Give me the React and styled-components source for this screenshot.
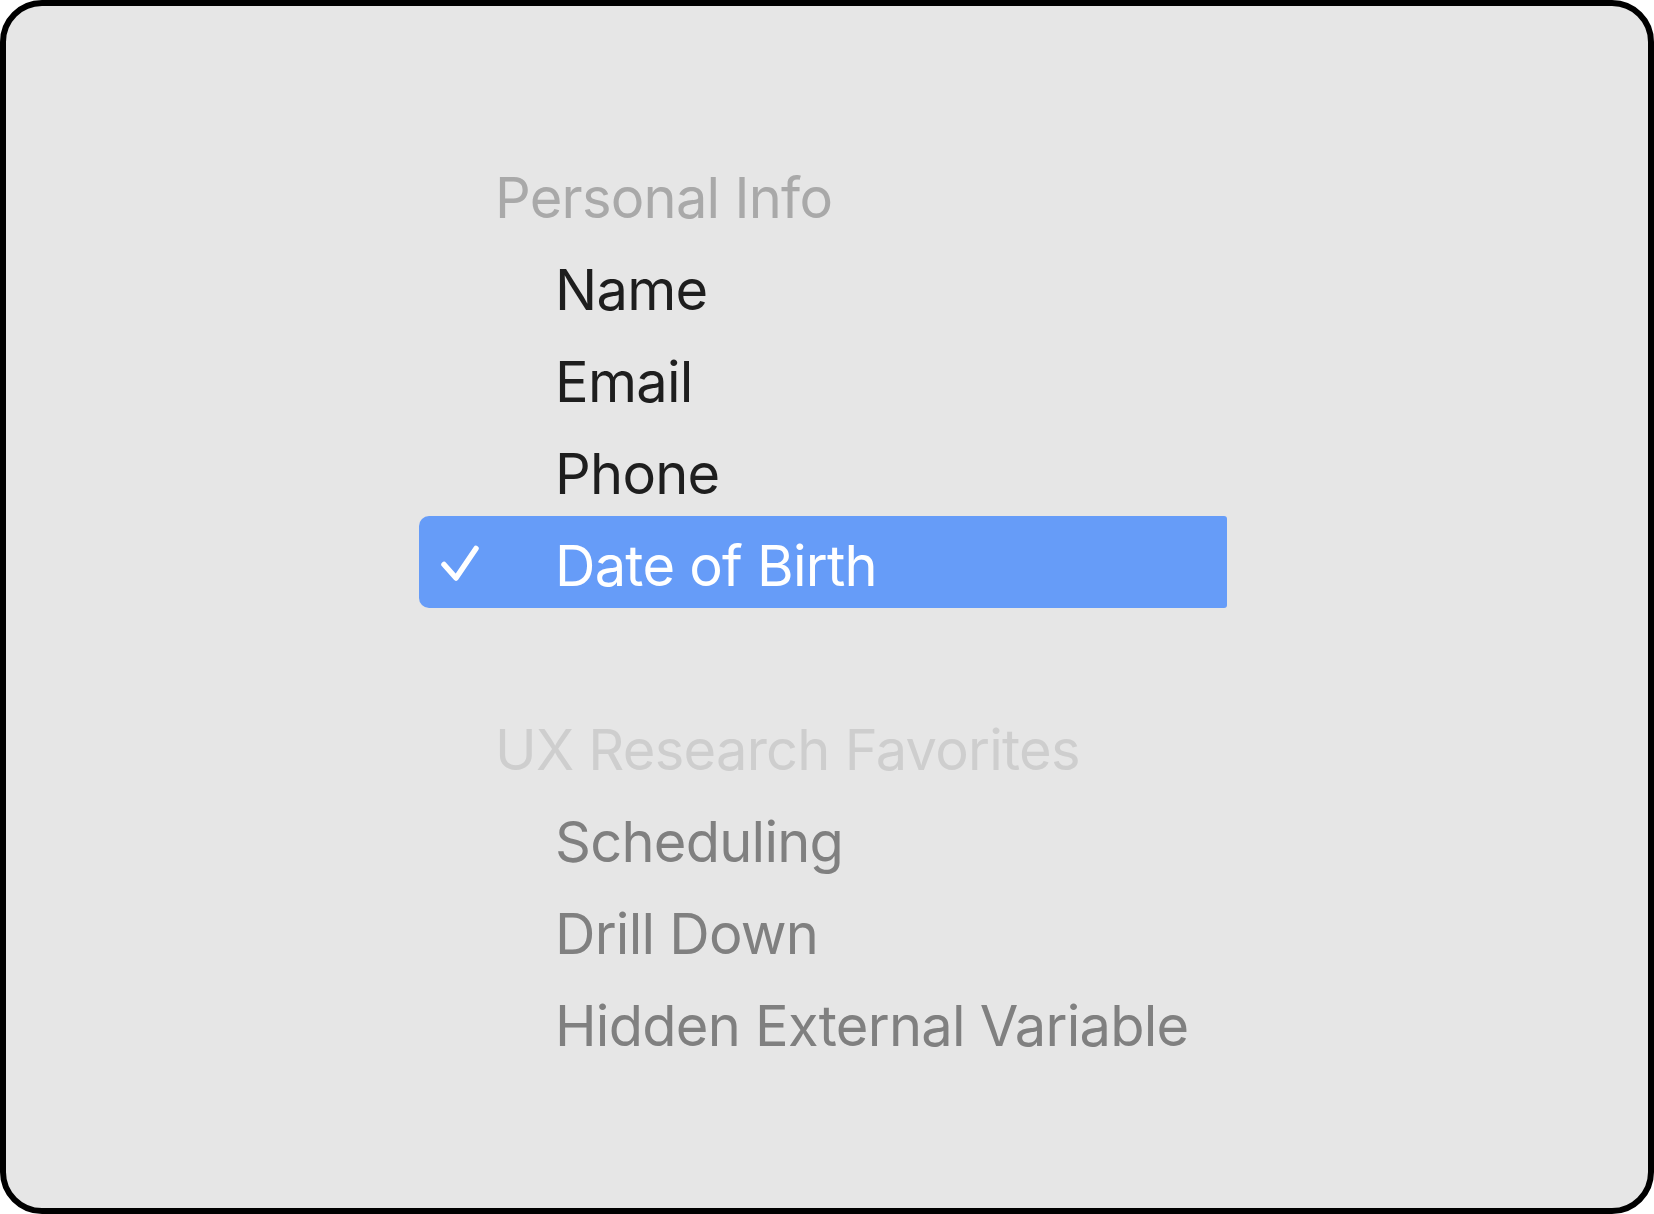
import React from 'react';
import styled, { createGlobalStyle } from 'styled-components';

const GlobalStyle = createGlobalStyle`
  html, body {
    margin: 0;
    padding: 0;
    background: #ffffff;
  }
  * {
    box-sizing: border-box;
  }
`;

const sections = [
  {
    title: 'Personal Info',
    muted: false,
    items: [
      { label: 'Name' },
      { label: 'Email' },
      { label: 'Phone' },
      { label: 'Date of Birth', selected: true },
    ],
  },
  {
    title: 'UX Research Favorites',
    muted: true,
    items: [
      { label: 'Scheduling' },
      { label: 'Drill Down' },
      { label: 'Hidden External Variable' },
    ],
  },
];

const CheckIcon = () => (
  <svg width="38" height="38" viewBox="0 0 38 38" fill="none">
    <path
      d="M3 19.5 L15 33 L35 3.5"
      stroke="#ffffff"
      strokeWidth="5.5"
      strokeLinecap="round"
      strokeLinejoin="round"
    />
  </svg>
);

const App = () => {
  return (
    <>
      <GlobalStyle />
      <Frame>
        <Menu>
          {sections.map((section, i) => (
            <Section key={section.title}>
              {i > 0 && <Spacer />}
              <Header muted={section.muted}>{section.title}</Header>
              {section.items.map((item) => (
                <Row key={item.label} selected={item.selected}>
                  <CheckCell>{item.selected && <CheckIcon />}</CheckCell>
                  <Label selected={item.selected} muted={section.muted}>
                    {item.label}
                  </Label>
                </Row>
              ))}
            </Section>
          ))}
        </Menu>
      </Frame>
    </>
  );
};

const Frame = styled.div`
  width: 1654px;
  height: 1214px;
  border: 6px solid #000000;
  border-radius: 42px;
  background-color: #e6e6e6;
  padding-top: 142px;
  padding-left: 413px;
  overflow: hidden;
  font-family: Inter, "Noto Sans", sans-serif;
`;

const Menu = styled.div`
  width: 808px;
  display: flex;
  flex-direction: column;
`;

const Section = styled.div`
  display: flex;
  flex-direction: column;
`;

const Spacer = styled.div`
  height: 92px;
`;

const Header = styled.div`
  height: 92px;
  display: flex;
  align-items: center;
  padding-left: 76px;
  padding-top: 7px;
  font-size: 56px;
  line-height: 1;
  letter-spacing: -0.75px;
  color: ${(p) => (p.muted ? '#cecece' : '#a9a9a9')};
  white-space: nowrap;
`;

const Row = styled.div`
  height: 92px;
  display: flex;
  align-items: center;
  background-color: ${(p) => (p.selected ? '#669cf8' : 'transparent')};
  border-radius: 10px 3px 3px 10px;
`;

const CheckCell = styled.div`
  width: 136px;
  flex: none;
  display: flex;
  align-items: center;
  padding-left: 22px;
  padding-top: 4px;
`;

const Label = styled.div`
  padding-top: 7px;
  font-size: 56px;
  line-height: 1;
  letter-spacing: -0.75px;
  white-space: nowrap;
  color: ${(p) => (p.selected ? '#ffffff' : p.muted ? '#808080' : '#1e1e1e')};
`;

export default App;
